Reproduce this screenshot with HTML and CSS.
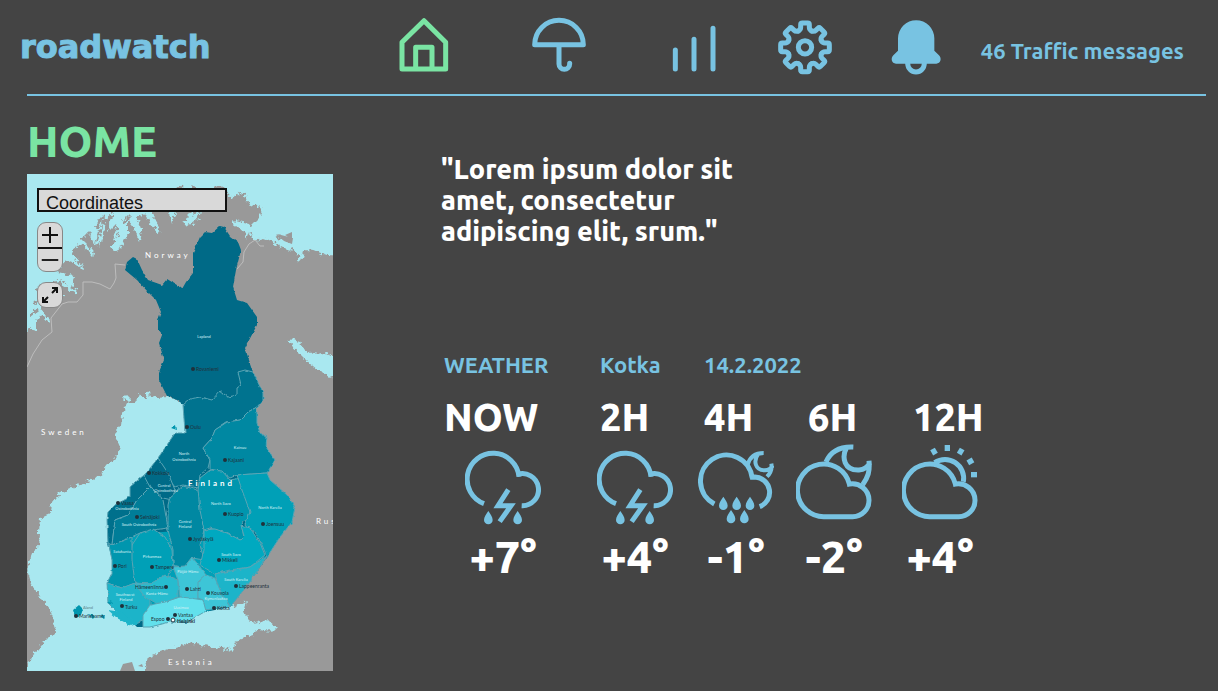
FILE: index.html
```html
<!DOCTYPE html>
<html lang="en">
<head>
<meta charset="utf-8">
<title>roadwatch</title>
<link rel="stylesheet" href="styles.css">
</head>
<body>
<header class="topbar">
  <a class="logo" href="#">roadwatch</a>
  <nav class="nav">
    <a class="nav-link nav-link-wide active" href="#" aria-label="Home">
      <svg class="icon" viewBox="1189 45 162 180"><path d="M1204 207V127L1270 62L1335 127V207Z M1245 207V142H1294V207"/></svg>
    </a>
    <a class="nav-link nav-link-wide" href="#" aria-label="Weather">
      <svg class="icon" viewBox="99 45 162 180"><path d="M107 134A73 73 0 0 1 253 134Z M180 134V192A16 16 0 0 0 212 192V190"/></svg>
    </a>
    <a class="nav-link" href="#" aria-label="Statistics">
      <svg class="icon" viewBox="501 45 162 180"><path d="M526 150V207M582 118V207M639 85V207"/></svg>
    </a>
    <a class="nav-link" href="#" aria-label="Settings">
      <svg class="icon" viewBox="-81 -97 162 180">
        <defs><path id="tooth" d="M-20-49C-16-51-13-54-13-60V-68Q-13-73-8-73H8Q13-73 13-68V-60C13-54 16-51 20-49"/></defs>
        <use href="#tooth"/><use href="#tooth" transform="rotate(45)"/><use href="#tooth" transform="rotate(90)"/><use href="#tooth" transform="rotate(135)"/>
        <use href="#tooth" transform="rotate(180)"/><use href="#tooth" transform="rotate(225)"/><use href="#tooth" transform="rotate(270)"/><use href="#tooth" transform="rotate(315)"/>
        <circle r="20"/>
      </svg>
    </a>
    <a class="nav-link" href="#" aria-label="Notifications">
      <svg class="icon" viewBox="88 45 162 180"><path class="solid" d="M115 115A54.500 54.500 0 0 1 224 115V152L238 166C247 175 243 191 230 191H109C96 191 92 175 101 166L115 152Z"/><path d="M144 190A25 26 0 0 0 194 190"/></svg>
    </a>
  </nav>
  <a class="messages" href="#">46 Traffic messages</a>
</header>

<main class="page">
  <section class="side">
    <h1 class="title">HOME</h1>
    <div class="map">
      <svg class="map-art" viewBox="27 174 306 497" role="img" aria-label="Map of Finland">
        <defs>
          <filter id="coast" x="-5%" y="-5%" width="110%" height="110%"><feTurbulence type="fractalNoise" baseFrequency="0.22" numOctaves="3" seed="4"/><feDisplacementMap in="SourceGraphic" scale="8" xChannelSelector="R" yChannelSelector="G"/></filter>
          <filter id="edge" x="-5%" y="-5%" width="110%" height="110%"><feTurbulence type="fractalNoise" baseFrequency="0.2" numOctaves="2" seed="9"/><feDisplacementMap in="SourceGraphic" scale="3" xChannelSelector="R" yChannelSelector="G"/></filter>
        </defs>
        <rect class="land" x="27" y="174" width="306" height="497"/>
        <g class="sea" filter="url(#coast)">
          <path d="M15 160H345V256L327 255 318 252 308 250 304 252 301 261 297 260 299 254 292 250 284 248 276 244 268 240 262 239 255 241 250 233 247 241 244 231 236 227 232 221 240 222 252 225 260 217 262 208 256 206 248 203 246 196 239 193 232 198 227 192 224 187 217 186 213 190 200 192 193 186 188 191 177 188 170 194 160 200 150 210 154 219 160 229 152 225 144 213 137 218 143 234 134 228 128 220 128 234 119 251 112 248 120 234 116 224 109 231 111 215 104 220 98 232 95 246 89 232 82 239 90 247 79 244 71 253 80 260 66 261 58 272 74 276 72 289 61 279 52 292 43 296 53 300 40 306 44 314 36 320 36 331 30 327 27 333 15 333Z"/>
          <path d="M200 212L197 220 188 226 182 222 192 216ZM168 213L176 212 171 224ZM276 232L284 238 294 240 292 245 276 241Z"/>
          <path d="M288 340L296 339 299 344 311 354 315 351 320 356 326 353 334 357H345V380L333 378 318 370 308 362 298 352Z"/>
          <path d="M167 396L145 398 139 394 135 403 127 403 122 413 121 425 114 433 120 447 118 455 108 465 98 477 85 483 73 487 60 493 52 503 51 513 40 518 38 547 32 552 28 573 32 587 42 600 50 610 57 632 45 640 37 650 27 665V685H146V667L148 657 160 652 187 643 202 645 217 647 233 651 238 640 253 635 257 630 273 632 277 628 267 619 253 623 243 613 246 601 236 607 225 590 200 440 186 405Z"/>
        </g>
        <g class="fjords" filter="url(#coast)"><path d="M127 216L122 240M119 225L113 250M134 220L140 240M104 225L98 245M86 246L94 256M72 260L84 268M62 284L76 292M46 300L66 296M150 214L158 232M196 206L186 226M100 214L92 228M40 312L50 322M130 402L124 396M150 402L147 392"/></g>
        <g class="shoals" filter="url(#coast)"><path d="M96 228L104 216M84 240L91 232M74 250L82 256M60 268L70 272M54 282L62 288M36 290L46 284M34 304L42 298M30 316L38 310M108 220L114 214M236 203L246 208M176 190L182 187M124 222L130 216M276 236L290 240"/></g>
        <g class="islands"><path d="M285 235L292 232 292 239ZM120 671L123 664 132 662 135 671ZM138 666l4-2 1 3zM277 234l16 4-1 6-8-3z"/></g>
        <path class="border-line" d="M27 367L33 354 42 340 52 332 51 318 62 304 68 302 77 302 83 295V282L92 282 100 284 110 289 114 283 116 278 115 264 125 265M237 269L243 262 244 252 249 244 255 240 260 246 264 246"/>
        <g filter="url(#edge)">
          <path class="r-lapland" d="M125 270L127 262 133 257 137 259 142 270 148 280 162 285 167 279 177 285 182 289 186 282 193 273V253L200 237 205 232 212 233 220 226 224 227 230 236 238 242 241 250 236 270 233 287 237 300 247 303 257 317V325L245 348 253 372 263 393V400L257 407V423L260 433 267 437 266 447 275 460 267 473 270 480 287 495 295 507 292 522 280 537 267 557 250 582 230 607 215 610 200 613 187 623 170 622 150 627H137L127 617 108 603 107 583 112 573V560L108 543 107 520 108 512 115 505 130 497V487L138 480 148 472 158 458 167 445 175 433H185L186 407 177 400 167 396 159 380V372L164 360 159 343 162 335 158 330V320L161 312 156 300 148 292 137 280Z"/>
          <path class="r-karelia" d="M112 545L140 533 204 530 262 545 265 557 250 580 229 606 190 615 143 622 112 600Z"/>
          <g class="region">
            <path class="r-north-ostro" d="M183 405L190 399 200 397 212 400 220 391 228 397 237 395V388L241 385 238 372 245 370 253 372 263 393V400L257 407 248 412 240 420 227 422 215 430 212 438 203 448 210 460 208 468 200 475 198 488 183 485 175 487 165 475 158 458 167 445 175 433H185Z"/>
            <path class="r-kainuu" d="M257 407V423L260 433 267 437 266 447 275 460 267 473 237 475 230 478 220 471 210 469V460L203 448 212 438 215 430 227 422 240 420 248 412Z"/>
            <path class="r-coast" d="M148 472L138 480 130 487V497L115 505 108 512 107 520 108 543 112 545 115 520 128 515 137 500 150 487Z"/>
            <path class="r-lapland" d="M158 458L168 473 175 490 172 500 163 498 150 487 144 476Z"/>
            <path class="r-south-ostro" d="M150 487L163 500 168 528 153 530 140 533 125 540 112 545 115 520 128 515 137 500Z"/>
            <path class="r-central" d="M170 497L183 486 198 490 202 510 204 530 200 545 204 560 192 558 185 568 173 565V550L168 530V505Z"/>
            <path class="r-north-savo" d="M200 478L210 470 222 471 230 480 241 478 242 490 248 500 250 512 247 520 241 523 244 538 240 540 227 533 210 528 204 530 200 510 198 490Z"/>
            <path class="r-karelia" d="M237 475L267 473 270 480 287 495 295 507 292 522 280 537 267 557 262 545 255 532 245 525 250 512 242 490Z"/>
            <path class="r-south-savo" d="M204 530L215 529 227 533 240 540 244 536 241 525 250 528 260 543 265 555 250 567 230 570 215 574 200 565 204 550Z"/>
            <path class="r-pirkanmaa" d="M140 533L153 529 165 537 172 550 173 565 167 577 150 584 135 583 130 560 132 545Z"/>
            <path class="r-north-savo" d="M112 545L132 537V560L135 583 122 588 107 583 112 573V560L109 545Z"/>
            <path class="r-southwest" d="M107 583L122 588 135 583 150 590V605L143 620 130 625 108 603Z"/>
            <path class="r-hame" d="M135 584L150 584 165 575 178 580V597L160 605 145 597Z"/>
            <path class="r-paijat" d="M173 567L185 566 192 557 200 567 206 575 198 590V600L180 597 178 580Z"/>
            <path class="r-southwest" d="M215 574L250 567 267 556 250 582 230 607 222 600 218 585Z"/>
            <path class="r-paijat" d="M198 582L206 575 215 578 220 590 230 606 205 610 203 600 198 598Z"/>
            <path class="r-uusimaa" d="M150 605L165 602 180 597 190 598 203 600 206 611 187 622 170 622 150 627H143V615Z"/>
          </g>
        </g>
        <g class="r-north-savo" filter="url(#edge)"><path d="M73 610l6-5 4 4-2 6-6 2zM88 614l7 2-2 3zM100 616l5-1-1 4zM107 603l4-3 2 4zM171 428l5-3 1 5z"/><path class="r-southwest" d="M108 610l14 2 5 5 12 6-8 3-14-8z"/></g>
        <g class="country">
          <text x="145" y="258">Norway</text><text x="41" y="435">Sweden</text><text class="bold" x="188" y="486">Finland</text><text x="316" y="524">Rus</text><text x="168" y="665">Estonia</text>
        </g>
        <g class="area">
          <text x="204" y="338">Lapland</text><text x="184" y="455">North</text><text x="184" y="461">Ostrobothnia</text><text x="240" y="449">Kainuu</text><text x="164" y="487">Central</text><text x="166" y="492">Ostrobothnia</text><text x="127" y="510">Ostrobothnia</text><text x="139" y="526">South Ostrobothnia</text><text x="185" y="523">Central</text><text x="185" y="528">Finland</text><text x="221" y="505">North Savo</text><text x="270" y="509">North Karelia</text><text x="122" y="553">Satakunta</text><text x="152" y="558">Pirkanmaa</text><text x="231" y="556">South Savo</text><text x="188" y="573">Päijät-Häme</text><text x="236" y="581">South Karelia</text><text x="125" y="596">Southwest</text><text x="126" y="601">Finland</text><text x="157" y="595">Kanta-Häme</text><text x="216" y="600">Kymenlaakso</text><text x="181" y="609">Uusimaa</text><text class="dim" x="88" y="609">Åland</text>
        </g>
        <g class="city">
          <circle cx="193" cy="369" r="2"/><text x="196" y="371">Rovaniemi</text><circle cx="187" cy="427" r="2"/><text x="190" y="429">Oulu</text><circle cx="225" cy="460" r="2"/><text x="228" y="462">Kajaani</text><circle cx="149" cy="473" r="2"/><text x="152" y="475">Kokkola</text><circle cx="118" cy="503" r="2"/><text x="121" y="505">Vaasa</text><circle cx="137" cy="517" r="2"/><text x="140" y="519">Seinäjoki</text><circle cx="225" cy="514" r="2"/><text x="228" y="516">Kuopio</text><circle cx="263" cy="524" r="2"/><text x="266" y="526">Joensuu</text><circle cx="190" cy="539" r="2"/><text x="193" y="541">Jyväskylä</text><circle cx="219" cy="560" r="2"/><text x="222" y="562">Mikkeli</text><circle cx="115" cy="566" r="2"/><text x="118" y="568">Pori</text><circle cx="152" cy="567" r="2"/><text x="155" y="569">Tampere</text><text x="135" y="589">Hämeenlinna</text><circle cx="166" cy="587" r="2"/><circle cx="187" cy="589" r="2"/><text x="190" y="591">Lahti</text><circle cx="208" cy="593" r="2"/><text x="211" y="595">Kouvola</text><circle cx="236" cy="586" r="2"/><text x="239" y="588">Lappeenranta</text><circle cx="122" cy="606" r="2"/><text x="125" y="609">Turku</text><circle cx="214" cy="608" r="2"/><text x="217" y="610">Kotka</text><circle cx="76" cy="616" r="2"/><text x="79" y="618">Mariehamn</text><circle cx="175" cy="615" r="2"/><text x="178" y="617">Vantaa</text><text x="151" y="621">Espoo</text><circle cx="168" cy="619" r="2"/><circle class="capital" cx="173" cy="620" r="2"/><text class="bold" x="177" y="623">Helsinki</text>
        </g>
      </svg>
      <div class="map-tools">
        <input class="coords" type="text" aria-label="Coordinates" value="Coordinates">
        <div class="zoom">
          <button class="tool" type="button" aria-label="Zoom in"><svg class="tool-icon" viewBox="0 0 24 24"><path d="M4 12H20M12 4V20"/></svg></button>
          <button class="tool" type="button" aria-label="Zoom out"><svg class="tool-icon" viewBox="0 0 24 24"><path d="M3 12H21"/></svg></button>
        </div>
        <button class="tool expand" type="button" aria-label="Full screen"><svg class="tool-icon" viewBox="0 0 24 24"><path d="M14 10L19 5M14 5H19V10M10 14L5 19M5 14V19H10"/></svg></button>
      </div>
    </div>
  </section>

  <section class="content">
    <blockquote class="quote">"Lorem ipsum dolor sit amet, consectetur adipiscing elit, srum."</blockquote>
    <div class="columns labels"><span>WEATHER</span><span>Kotka</span><span>14.2.2022</span></div>
    <div class="columns hours"><span>NOW</span><span>2H</span><span>4H</span><span>6H</span><span>12H</span></div>
    <div class="forecast">
      <div class="reading">
        <svg class="sky" viewBox="105 312 228 246">
          <defs>
            <path id="drop" d="M0 0C6 10 13 17 13 27A13 13 0 0 1-13 27C-13 17-6 10 0 0Z"/>
            <g id="storm"><path d="M162 491A78 78 0 1 1 267 410"/><path d="M261 404A48 48 0 1 1 275 497"/><path d="M235 449L204 497H243L209 545"/><use class="solid" href="#drop" x="175" y="513"/><use class="solid" href="#drop" x="263" y="513"/></g>
          </defs>
          <use href="#storm"/>
        </svg>
        <span>+7°</span>
      </div>
      <div class="reading">
        <svg class="sky" viewBox="105 312 228 246"><use href="#storm"/></svg>
        <span>+4°</span>
      </div>
      <div class="reading">
        <svg class="sky" viewBox="25 312 228 246">
          <path d="M74 492A78 78 0 1 1 188 415"/><path d="M181 412L196 411A46 46 0 0 1 210 500"/>
          <path class="thin" d="M174 374C180 352 196 339 222 339M206 341C190 362 196 392 226 391C238 390 245 384 250 376M245 371C248 388 244 398 232 410"/>
          <g class="solid"><use href="#drop" x="101" y="470"/><use href="#drop" x="141" y="470"/><use href="#drop" x="181" y="470"/><use href="#drop" x="124" y="510"/><use href="#drop" x="164" y="510"/></g>
        </svg>
        <span>-1°</span>
      </div>
      <div class="reading">
        <svg class="sky" viewBox="318 312 228 246">
          <path id="cloud" d="M404 530H488A49 49 0 0 0 537 480A50 50 0 0 0 478 432A79 79 0 1 0 404 530Z"/>
          <path d="M408 366C420 338 444 319 490 321M470 322C454 352 462 392 507 390C524 389 533 382 540 368M537 362C540 395 534 412 518 434"/>
        </svg>
        <span>-2°</span>
      </div>
      <div class="reading">
        <svg class="sky" viewBox="636 312 228 246">
          <use href="#cloud" x="318"/><path d="M734 368A56 56 0 0 1 820 425"/>
          <g class="solid"><rect id="ray" x="764" y="315" width="16" height="18"/><use href="#ray" transform="rotate(-30 772 404)"/><use href="#ray" transform="rotate(30 772 404)"/><use href="#ray" transform="rotate(60 772 404)"/><use href="#ray" transform="rotate(90 772 404)"/></g>
        </svg>
        <span>+4°</span>
      </div>
    </div>
  </section>
</main>
</body>
</html>
```
FILE: styles.css
```css
:root {
  --bg: #444444;
  --blue: #78c3e2;
  --green: #7ae4a3;
  --sea: #a9e8f0;
}
* { box-sizing: border-box; }
body {
  margin: 0;
  background: var(--bg);
  color: #fff;
  font-family: Ubuntu, "Noto Sans", sans-serif;
  font-weight: 800;
}
a { color: inherit; text-decoration: none; }
svg { display: block; }

.topbar {
  display: flex;
  align-items: center;
  min-height: 96px;
  padding: 14px 34px 20px 20px;
  color: var(--blue);
  background: linear-gradient(var(--blue), var(--blue)) 27px 100% / calc(100% - 39px) 2px no-repeat;
}
.logo {
  width: 32.4%;
  padding-top: 4px;
  font-family: "DejaVu Sans", sans-serif;
  font-size: 32px;
  line-height: 40px;
  -webkit-text-stroke: 1px currentColor;
}
.nav { display: flex; gap: 57px; }
.nav-link-wide { margin-right: 24px; }
.active { color: var(--green); }
.icon {
  width: 54px;
  height: 60px;
  fill: none;
  stroke: currentColor;
  stroke-width: 15;
  stroke-linecap: round;
  stroke-linejoin: round;
}
.icon .solid { fill: currentColor; stroke: none; }
.messages { margin-left: auto; padding-top: 12px; font-size: 22px; font-weight: 700; line-height: 28px; white-space: nowrap; }

.page {
  display: grid;
  grid-template-columns: 306px 1fr;
  gap: 108px;
  padding: 20px 12px 20px 27px;
}
.title { margin: 0 0 8px; color: var(--green); font-size: 43px; font-weight: 800; line-height: 50px; }
.map { position: relative; }
.map-art { width: 100%; height: auto; background: var(--sea); }
.land, .islands { fill: #999999; }
.sea { fill: var(--sea); }
.fjords { fill: none; stroke: var(--sea); stroke-width: 3; }
.shoals { fill: none; stroke: #999999; stroke-width: 3; }
.border-line { fill: none; stroke: #bdbdbd; }
.region { stroke: #5aa5b5; stroke-width: 1; }
.r-lapland { fill: #006a87; }
.r-north-ostro { fill: #00738f; }
.r-coast { fill: #00708c; }
.r-south-ostro { fill: #007d98; }
.r-kainuu, .r-central { fill: #0088a2; }
.r-north-savo { fill: #0096ae; }
.r-karelia, .r-pirkanmaa { fill: #00a0b7; }
.r-south-savo { fill: #00a9c0; }
.r-southwest { fill: #1cb4c9; }
.r-hame { fill: #28bccf; }
.r-paijat { fill: #3cc5d7; }
.r-uusimaa { fill: #62e0ec; }
.map-art text { font-family: Lato, sans-serif; font-weight: 400; }
.map-art .bold { font-weight: 700; }
.country text { font-size: 8px; letter-spacing: 3px; fill: #fff; }
.area text { font-size: 4px; text-anchor: middle; fill: #d5f1f5; }
.area .dim { fill: #5b7f88; }
.city { fill: #20303a; }
.city text { font-size: 5px; }
.city .capital { fill: #fff; stroke: #20303a; }

.map-tools { position: absolute; top: 14px; left: 10px; }
.coords {
  display: block;
  width: 190px;
  height: 24px;
  padding: 7px 7px 0;
  border: 2px solid #111;
  background: #d9d9d9;
  color: #111;
  font-family: "Liberation Sans", sans-serif;
  font-size: 18px;
}
.zoom {
  width: 26px;
  margin: 10px 0;
  border: 1px solid #888;
  border-radius: 9px;
  background: #d9d9d9;
}
.tool {
  display: block;
  width: 100%;
  height: 24px;
  padding: 0;
  border: 0;
  background: transparent;
}
.tool + .tool { border-top: 2px solid #111; }
.tool-icon { width: 24px; height: 100%; fill: none; stroke: #111; stroke-width: 2; }
.expand { width: 26px; height: 26px; border: 1px solid #888; border-radius: 9px; background: #d9d9d9; }

.content { padding-top: 38px; }
.quote { max-width: 320px; margin: 0 0 103px; font-size: 27px; line-height: 31px; }
.columns {
  display: grid;
  grid-template-columns: 156px 104px 104px 105px auto;
  padding-left: 3px;
}
.labels { color: var(--blue); font-size: 22px; font-weight: 700; line-height: 30px; }
.hours { margin-top: 12px; font-size: 38px; line-height: 50px; }
.forecast {
  display: grid;
  grid-template-columns: 132px 101px 98px 106px auto;
  padding: 2px 0 0 24px;
}
.reading {
  display: flex;
  flex-direction: column;
  align-items: center;
  width: 76px;
  font-size: 45px;
  line-height: 62px;
  white-space: nowrap;
}
.sky { width: 76px; height: 82px; fill: none; stroke: var(--blue); stroke-width: 15; }
.sky .solid { fill: var(--blue); stroke: none; }
.sky .thin { stroke-width: 12; }
```
